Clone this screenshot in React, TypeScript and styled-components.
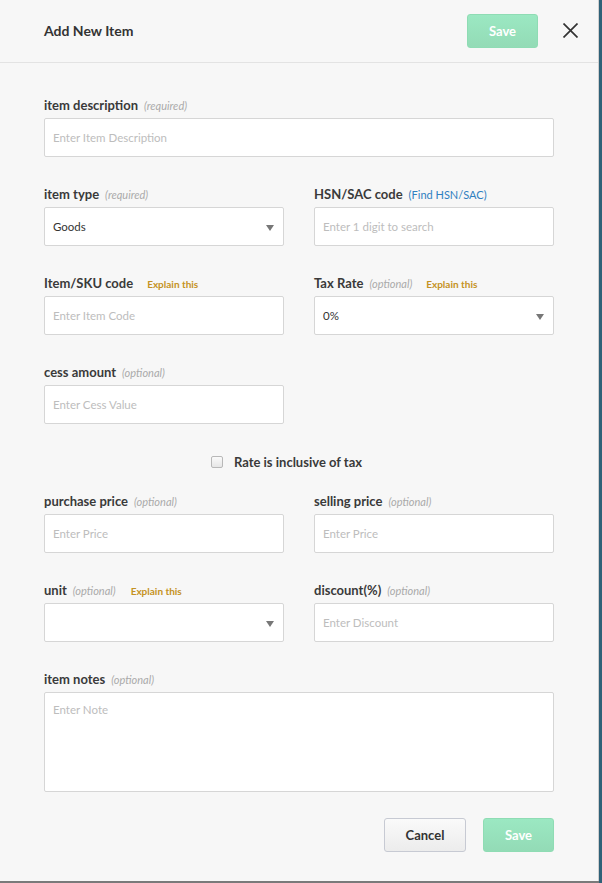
import React from "react";
import styled, { createGlobalStyle } from "styled-components";

const Global = createGlobalStyle`
  html, body { margin: 0; padding: 0; }
  body {
    background: #7a7a7a;
    font-family: Lato, "Open Sans", "Noto Sans", sans-serif;
    overflow: hidden;
  }
  * { box-sizing: border-box; }
`;

const Page = styled.div`
  width: 602px;
  height: 883px;
  background: linear-gradient(to right, transparent 599px, #2f6178 599px);
`;

const Modal = styled.div`
  width: 599px;
  height: 881px;
  background: #f7f7f7;
  border-right: 1px solid #cfcfcf;
  display: flex;
  flex-direction: column;
`;

const Header = styled.div`
  height: 63px;
  flex-shrink: 0;
  border-bottom: 1px solid #e3e3e3;
  display: flex;
  align-items: center;
  padding: 0 20px 1px 44px;
`;

const Title = styled.h1`
  flex: 1;
  margin: 0;
  font-size: 14px;
  font-weight: 700;
  color: #333;
`;

const SaveButton = styled.button`
  width: 71px;
  height: 34px;
  border: 1px solid #8fdcb4;
  border-radius: 3px;
  background: linear-gradient(#9be8c2, #93dbb6);
  color: #fff;
  font-family: inherit;
  font-size: 13px;
  font-weight: 700;
`;

const Close = styled.button`
  margin-left: 25px;
  width: 15px;
  height: 15px;
  padding: 0;
  border: none;
  background: none;
  display: flex;
  align-items: center;
  justify-content: center;
`;

const Body = styled.div`
  padding: 34px 44px 0 44px;
  display: flex;
  flex-direction: column;
`;

const Row = styled.div<{ $mb?: number }>`
  display: grid;
  grid-template-columns: 240px 240px;
  column-gap: 30px;
  margin-bottom: ${(p) => p.$mb ?? 29}px;
`;

const Field = styled.div`
  display: flex;
  flex-direction: column;
`;

const Label = styled.div`
  height: 16px;
  line-height: 16px;
  margin-bottom: 5px;
  display: flex;
  align-items: baseline;
  font-size: 13px;
  font-weight: 700;
  color: #3a3a3a;
  white-space: nowrap;
`;

const Hint = styled.span`
  margin-left: 6px;
  font-size: 11px;
  font-style: italic;
  font-weight: 400;
  color: #aaa;
`;

const Explain = styled.span<{ $ml: number }>`
  margin-left: ${(p) => p.$ml}px;
  font-size: 10px;
  font-weight: 700;
  color: #c59223;
`;

const Link = styled.span`
  margin-left: 6px;
  font-size: 11px;
  font-weight: 400;
  color: #2f7fc1;
`;

const Input = styled.div<{ $h?: number; $top?: boolean }>`
  position: relative;
  height: ${(p) => p.$h ?? 39}px;
  background: #fff;
  border: 1px solid #d6d6d6;
  border-radius: 2px;
  padding: ${(p) => (p.$top ? "10px 8px" : "0 8px")};
  display: flex;
  align-items: ${(p) => (p.$top ? "flex-start" : "center")};
  font-size: 11.5px;
`;

const Placeholder = styled.span`
  color: #bdbdbd;
`;

const Value = styled.span`
  color: #333;
`;

const Arrow = styled.span`
  position: absolute;
  right: 9px;
  top: 50%;
  margin-top: -2px;
  width: 0;
  height: 0;
  border-left: 4.5px solid transparent;
  border-right: 4.5px solid transparent;
  border-top: 6px solid #777;
`;

const CheckRow = styled.div`
  display: flex;
  align-items: center;
  justify-content: center;
  gap: 11px;
  padding-right: 25px;
  margin: 0 0 22px 0;
  height: 18px;
  font-size: 13px;
  font-weight: 700;
  color: #3a3a3a;
`;

const Checkbox = styled.span`
  width: 12px;
  height: 12px;
  border: 1px solid #b8b8b8;
  border-radius: 2px;
  background: linear-gradient(#fafafa, #e6e6e6);
`;

const Footer = styled.div`
  display: flex;
  justify-content: flex-end;
  gap: 17px;
  margin-top: 26px;
`;

const CancelButton = styled.button`
  width: 82px;
  height: 34px;
  border: 1px solid #c7cad3;
  border-radius: 3px;
  background: linear-gradient(#fafafa, #ececec);
  color: #333;
  font-family: inherit;
  font-size: 13px;
  font-weight: 700;
`;

const Wide = styled.div`
  grid-column: 1 / 3;
`;

type FProps = {
  label: string;
  hint?: string;
  explain?: number;
  link?: string;
  children: React.ReactNode;
};

const F = ({ label, hint, explain, link, children }: FProps) => (
  <Field>
    <Label>
      {label}
      {hint && <Hint>({hint})</Hint>}
      {link && <Link>({link})</Link>}
      {explain !== undefined && <Explain $ml={explain}>Explain this</Explain>}
    </Label>
    {children}
  </Field>
);

export default function App() {
  return (
    <Page>
      <Global />
      <Modal>
        <Header>
          <Title>Add New Item</Title>
          <SaveButton>Save</SaveButton>
          <Close>
            <svg width="15" height="15" viewBox="0 0 15 15">
              <path d="M0.5 0.5L14.5 14.5M14.5 0.5L0.5 14.5" stroke="#333" strokeWidth="1.7" />
            </svg>
          </Close>
        </Header>
        <Body>
          <Row>
            <Wide>
              <F label="item description" hint="required">
                <Input><Placeholder>Enter Item Description</Placeholder></Input>
              </F>
            </Wide>
          </Row>
          <Row>
            <F label="item type" hint="required">
              <Input><Value>Goods</Value><Arrow /></Input>
            </F>
            <F label="HSN/SAC code" link="Find HSN/SAC">
              <Input><Placeholder>Enter 1 digit to search</Placeholder></Input>
            </F>
          </Row>
          <Row>
            <F label="Item/SKU code" explain={14}>
              <Input><Placeholder>Enter Item Code</Placeholder></Input>
            </F>
            <F label="Tax Rate" hint="optional" explain={14}>
              <Input><Value>0%</Value><Arrow /></Input>
            </F>
          </Row>
          <Row>
            <F label="cess amount" hint="optional">
              <Input><Placeholder>Enter Cess Value</Placeholder></Input>
            </F>
          </Row>
          <CheckRow>
            <Checkbox />
            Rate is inclusive of tax
          </CheckRow>
          <Row>
            <F label="purchase price" hint="optional">
              <Input><Placeholder>Enter Price</Placeholder></Input>
            </F>
            <F label="selling price" hint="optional">
              <Input><Placeholder>Enter Price</Placeholder></Input>
            </F>
          </Row>
          <Row>
            <F label="unit" hint="optional" explain={15}>
              <Input><Arrow /></Input>
            </F>
            <F label="discount(%)" hint="optional">
              <Input><Placeholder>Enter Discount</Placeholder></Input>
            </F>
          </Row>
          <F label="item notes" hint="optional">
            <Input $h={100} $top><Placeholder>Enter Note</Placeholder></Input>
          </F>
          <Footer>
            <CancelButton>Cancel</CancelButton>
            <SaveButton>Save</SaveButton>
          </Footer>
        </Body>
      </Modal>
    </Page>
  );
}
